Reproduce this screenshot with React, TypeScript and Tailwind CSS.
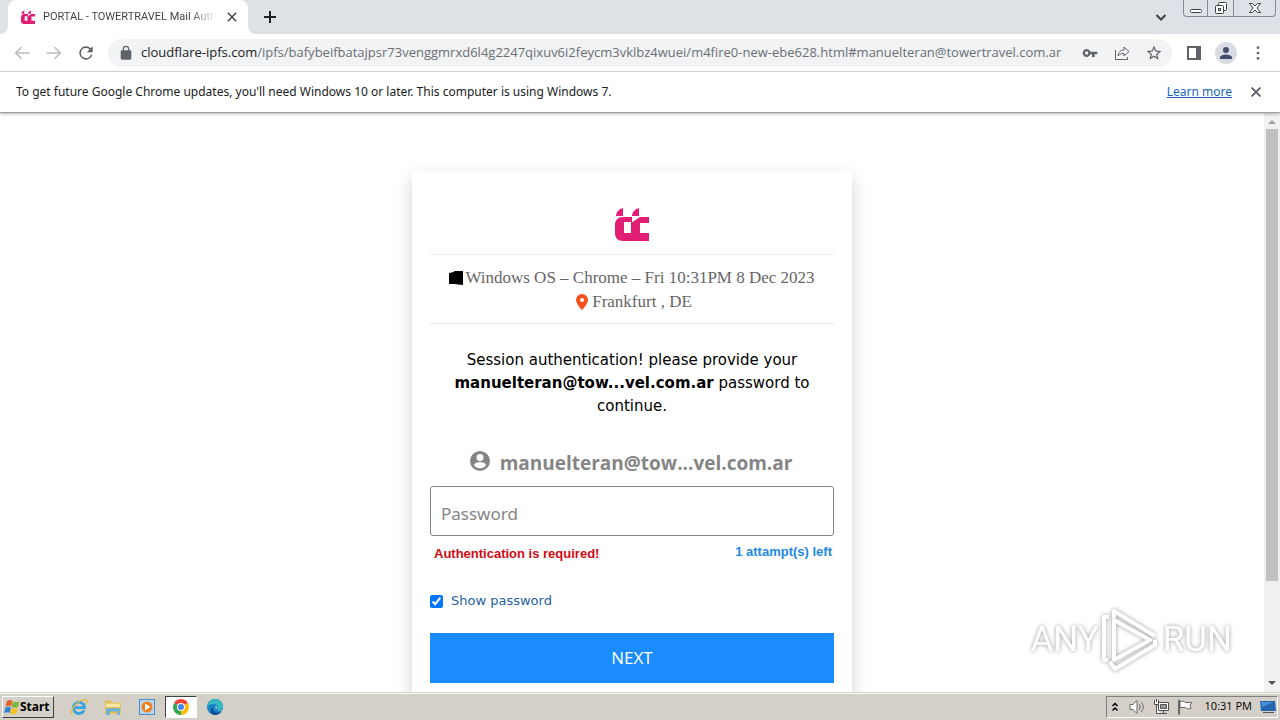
import type { ReactNode } from "react";

const TowerLogo = ({ className }: { className: string }) => (
  <svg viewBox="0 0 34 34" className={className} fill="#e11d74">
    <path d="M1 9c0-4 3-7 7-8v8z" />
    <path d="M17 9c0-4 3-7 7-8v8z" />
    <path d="M8 10h9v6h-1v-1H9v11h7V16l9-6h9v6h-9v10h9v8H8c-5 0-8-3-8-8v-8c0-5 3-8 8-8z" />
    <path d="M16 17h9v9h-9z" />
  </svg>
);

const Icon = ({ className, children }: { className: string; children: ReactNode }) => (
  <svg viewBox="0 0 24 24" className={className} fill="currentColor">
    {children}
  </svg>
);

const closePath = "M19 6.4 17.6 5 12 10.6 6.4 5 5 6.4 10.6 12 5 17.6 6.4 19 12 13.4 17.6 19 19 17.6 13.4 12z";

const TabStrip = () => (
  <div className="flex h-[34px] items-start bg-[#dee1e6]">
    <div className="flex h-full w-2 bg-white">
      <div className="w-full rounded-br-lg bg-[#dee1e6]" />
    </div>
    <div className="flex h-full w-60 items-center rounded-t-lg bg-white pr-2 pl-3 text-[#3c4043]">
      <TowerLogo className="mx-px h-3.5 w-3.5 shrink-0" />
      <span className="ml-[7px] w-44 overflow-hidden bg-linear-to-r from-[#3c4043] from-85% to-transparent bg-clip-text font-['Roboto',sans-serif] text-[11px] whitespace-nowrap text-transparent">
        PORTAL - TOWERTRAVEL Mail Authe
      </span>
      <button type="button" aria-label="Close tab" className="ml-2">
        <Icon className="h-4 w-4"><path d={closePath} /></Icon>
      </button>
    </div>
    <div className="flex h-full w-2 bg-white">
      <div className="w-full rounded-bl-lg bg-[#dee1e6]" />
    </div>
    <button type="button" aria-label="New tab" className="flex h-full w-7 items-center justify-center text-[#202124]">
      <svg viewBox="0 0 12 12" className="h-3 w-3" stroke="currentColor" strokeWidth="2"><path d="M6 0v12M0 6h12" /></svg>
    </button>
    <button type="button" aria-label="Search tabs" className="mr-2.5 ml-auto flex h-full w-6 items-center justify-center text-[#3c4043]">
      <svg viewBox="0 0 12 12" className="h-3 w-3" fill="none" stroke="currentColor" strokeWidth="2"><path d="M1.500 4 6 8.500 10.500 4" /></svg>
    </button>
    <div className="mr-1 flex h-[17px] rounded-b border border-t-0 border-[#858a94] text-[#3c4043]">
      <button type="button" aria-label="Minimize" className="flex w-6 items-center justify-center border-r border-[#858a94]">
        <svg viewBox="0 0 14 14" className="h-3.5 w-3.5" fill="#fff" stroke="currentColor"><rect x="1.500" y="8.500" width="11" height="3" rx="1" /></svg>
      </button>
      <button type="button" aria-label="Restore" className="flex w-[26px] items-center justify-center border-r border-[#858a94]">
        <svg viewBox="0 0 14 14" className="h-3.5 w-3.5" fill="#fff" stroke="currentColor"><rect x="4.500" y="1.500" width="8" height="8" rx="1" /><rect x="1.500" y="4.500" width="8" height="8" rx="1" /><rect x="4.500" y="7.500" width="2" height="2" /></svg>
      </button>
      <button type="button" aria-label="Close window" className="flex w-[41px] items-center justify-center">
        <svg viewBox="0 0 14 14" className="h-3.5 w-3.5" fill="#fff" stroke="currentColor"><path d="M1.500 2.500h3L7 5l2.500-2.500h3L9 7l3.500 4.500h-3L7 9l-2.500 2.500h-3L5 7z" /></svg>
      </button>
    </div>
  </div>
);

const toolButton = "flex h-8 w-8 shrink-0 items-center justify-center";

const Toolbar = () => (
  <div className="flex h-[38px] items-center border-b border-[#dadce0] bg-white px-1.5 text-[#5f6368]">
    <button type="button" aria-label="Back" className={`${toolButton} text-[#babcbe]`}>
      <Icon className="h-[18px] w-[18px]"><path d="M22 11H6l6-6-1.400-1.400L2 12l8.600 8.400L12 19l-6-6h16z" /></Icon>
    </button>
    <button type="button" aria-label="Forward" className={`${toolButton} text-[#babcbe]`}>
      <Icon className="h-[18px] w-[18px]"><path d="M2 11h16l-6-6 1.400-1.400L22 12l-8.600 8.400L12 19l6-6H2z" /></Icon>
    </button>
    <button type="button" aria-label="Reload" className={toolButton}>
      <Icon className="h-5 w-5"><path d="M17.650 6.350A8 8 0 1 0 19.730 14h-2.080A6 6 0 1 1 12 6c1.660 0 3.140.690 4.220 1.780L13 11h7V4z" /></Icon>
    </button>
    <div className="ml-1.5 flex h-7 min-w-0 flex-1 items-center rounded-full bg-[#f1f3f4] pr-0.5 pl-2.5">
      <Icon className="h-4 w-4 shrink-0"><path d="M18 8h-1V6A5 5 0 0 0 7 6v2H6a2 2 0 0 0-2 2v10c0 1.100.900 2 2 2h12a2 2 0 0 0 2-2V10a2 2 0 0 0-2-2zM9 6a3 3 0 0 1 6 0v2H9z" /></Icon>
      <p className="ml-[7px] min-w-0 flex-1 font-['Open_Sans',sans-serif] text-[13px] whitespace-nowrap text-[#6b6f74]">
        <span className="text-[#202124]">cloudflare-ipfs.com</span>/ipfs/bafybeifbatajpsr73venggmrxd6l4g2247qixuv6i2feycm3vklbz4wuei/m4fire0-new-ebe628.html#manuelteran@towertravel.com.ar
      </p>
      <button type="button" aria-label="Passwords" className={toolButton}>
        <Icon className="h-4 w-4"><path d="M12.650 10A6 6 0 1 0 12.650 14H15v4h4v-4h4v-4zM7 14.500a2.500 2.500 0 1 1 0-5 2.500 2.500 0 0 1 0 5z" /></Icon>
      </button>
      <button type="button" aria-label="Share" className={toolButton}>
        <svg viewBox="0 0 16 16" className="h-4 w-4" fill="none" stroke="currentColor"><path d="M1.500 5v9.500h12V12M4 11c.500-4 2.500-6 6-6V2l5 4.500L10 11V8.500C7 8.500 5.500 9 4 11z" /></svg>
      </button>
      <button type="button" aria-label="Bookmark" className={toolButton}>
        <Icon className="h-[18px] w-[18px]"><path d="m22 9.240-7.190-.620L12 2 9.190 8.630 2 9.240l5.460 4.730L5.820 21 12 17.270 18.180 21l-1.630-7.030zM12 15.400l-3.760 2.270 1-4.280-3.320-2.880 4.380-.380L12 6.100l1.710 4.040 4.380.380-3.320 2.880 1 4.280z" /></Icon>
      </button>
    </div>
    <div className="ml-1.5 flex items-center">
      <button type="button" aria-label="Side panel" className={toolButton}>
        <svg viewBox="0 0 14 14" className="h-3.5 w-3.5"><path d="M1 1h12v12H1z" fill="none" stroke="currentColor" strokeWidth="2" /><path d="M9 1h4v12H9z" fill="currentColor" /></svg>
      </button>
      <button type="button" aria-label="Profile" className={toolButton}>
        <span className="flex h-[22px] w-[22px] items-center justify-center rounded-full bg-[#d8dde3] text-[#414e6b]">
          <Icon className="h-[18px] w-[18px]"><path d="M12 12a4 4 0 1 0 0-8 4 4 0 0 0 0 8zm0 2c-2.670 0-8 1.340-8 4v2h16v-2c0-2.660-5.330-4-8-4z" /></Icon>
        </span>
      </button>
      <button type="button" aria-label="Menu" className={toolButton}>
        <Icon className="h-4 w-4"><circle cx="12" cy="4" r="2" /><circle cx="12" cy="12" r="2" /><circle cx="12" cy="20" r="2" /></Icon>
      </button>
    </div>
  </div>
);

const UpdateBar = () => (
  <div className="relative flex h-[41px] items-center border-b border-[#a0a0a0] bg-white px-4 text-[12px] text-[#202124] shadow-[0_1px_3px_rgba(0,0,0,0.3)]">
    <p>To get future Google Chrome updates, you'll need Windows 10 or later. This computer is using Windows 7.</p>
    <a href="#learn" className="ml-auto text-[#1a65c0] underline">Learn more</a>
    <button type="button" aria-label="Dismiss" className="ml-4 text-[#5f6368]">
      <Icon className="h-4 w-4"><path d={closePath} stroke="currentColor" /></Icon>
    </button>
  </div>
);

const LoginCard = () => (
  <form className="flex w-[440px] flex-col px-[18px] pt-9 shadow-[0_6px_16px_rgba(0,0,0,0.18)]" onSubmit={(e) => e.preventDefault()}>
    <TowerLogo className="mx-auto h-[34px] w-[34px]" />
    <div className="mt-[13px] border-y border-[#ececec] pt-[11px] pb-[9px] text-center font-['Liberation_Serif',serif] text-[17px] leading-6 text-[#666]">
      <p className="flex items-center justify-center gap-0.5">
        <svg viewBox="0 0 14 14" className="h-3.5 w-3.5"><path d="M0 2l5-1v-1h9v14l-9-1H0z" /></svg>
        Windows OS – Chrome – Fri 10:31PM 8 Dec 2023
      </p>
      <p className="flex items-center justify-center gap-1 pl-1">
        <svg viewBox="0 0 12 16" className="h-4 w-3"><path d="M6 0a6 6 0 0 0-6 6c0 4 6 10 6 10s6-6 6-10a6 6 0 0 0-6-6zm0 8a2 2 0 1 1 0-4 2 2 0 0 1 0 4z" fill="#f9511d" /></svg>
        Frankfurt , DE
      </p>
    </div>
    <p className="mt-[25px] px-4 text-center font-['DejaVu_Sans',sans-serif] text-[15px] leading-[23px] text-black">
      Session authentication! please provide your <b>manuelteran@tow...vel.com.ar</b> password to continue.
    </p>
    <div className="mt-[31px] flex items-center justify-center gap-2 pr-1 text-[#858585]">
      <Icon className="h-6 w-6"><path d="M12 0a10 10 0 1 0 0 20 10 10 0 0 0 0-20zm0 3a3.500 3.500 0 1 1 0 7 3.500 3.500 0 0 1 0-7zm0 14.200a7.200 7.200 0 0 1-6-3.200c0-2 4-3.100 6-3.100s6 1.100 6 3.100a7.200 7.200 0 0 1-6 3.200z" /></Icon>
      <span className="font-['Open_Sans',sans-serif] text-[19px] leading-7 font-bold">manuelteran@tow...vel.com.ar</span>
    </div>
    <input
      type="text"
      aria-label="Password"
      placeholder="Password"
      className="mt-[9px] h-[50px] w-full rounded-[3px] border border-[#858585] px-2.5 pt-1 font-['Noto_Sans',sans-serif] text-[17px] placeholder:text-[#858585]"
    />
    <div className="mt-2 flex items-start justify-between pr-0.5 pl-1 font-['Liberation_Sans',sans-serif] text-[13px] leading-5 font-bold">
      <span className="text-[#cf0a12]">Authentication is required!</span>
      <span className="leading-4 text-[#1e88e5]">1 attampt(s) left</span>
    </div>
    <label className="mt-[27px] flex items-center gap-2 font-['DejaVu_Sans',sans-serif] text-[13px] leading-5 text-[#1f5f9f]">
      <input type="checkbox" defaultChecked className="h-[13px] w-[13px]" />
      Show password
    </label>
    <button type="submit" className="mt-[22px] h-[50px] bg-[#1a8cff] font-['Open_Sans',sans-serif] text-[17px] text-white">NEXT</button>
    <div className="h-9" />
  </form>
);

const Scrollbar = () => (
  <div className="flex w-4 shrink-0 flex-col items-center bg-[#f1f1f1]">
    <svg viewBox="0 0 16 16" className="h-4 w-4" fill="#a3a3a3"><path d="M8 7l4 4H4z" /></svg>
    <div className="h-[452px] w-3 bg-[#c1c1c1]" />
    <svg viewBox="0 0 16 16" className="mt-auto h-4 w-4" fill="#505050"><path d="M4 5h8l-4 4z" /></svg>
  </div>
);

const Watermark = () => (
  <div className="absolute right-8 bottom-5 flex items-center font-['Roboto',sans-serif] text-[35px] leading-10 text-white drop-shadow-[0_0_2px_rgba(0,0,0,0.4)]">
    <span>ANY</span>
    <svg viewBox="0 0 60 64" className="h-16 w-[60px]" fill="none" stroke="#fff" strokeWidth="4" strokeLinejoin="round">
      <path d="M15 12v40l36-20z" />
      <path d="M10 9H5v43h4M15 10V3l41 25M11 54l5 7 40-24v-5" />
    </svg>
    <span className="ml-1">RUN</span>
  </div>
);

const ChromeIcon = () => (
  <svg viewBox="0 0 16 16" className="h-4 w-4">
    <path d="M8 8 1.100 4A8 8 0 0 1 14.900 4z" fill="#ea4335" />
    <path d="M8 8h0L14.900 4A8 8 0 0 1 8 16z" fill="#fbbc04" />
    <path d="M8 8v8A8 8 0 0 1 1.100 4z" fill="#34a853" />
    <circle cx="8" cy="8" r="4" fill="#fff" />
    <circle cx="8" cy="8" r="3" fill="#4285f4" />
  </svg>
);

const taskButton = "flex h-[22px] w-8 items-center justify-center";

const Taskbar = () => (
  <footer className="flex h-7 shrink-0 items-center border-t border-[#d4d0c8] bg-[#d4d0c8] text-black shadow-[inset_0_1px_#fff]">
    <button type="button" className="ml-0.5 flex h-[22px] w-[52px] items-center border border-t-white border-r-[#404040] border-b-[#404040] border-l-white px-px text-[12px] font-bold">
      <svg viewBox="0 0 16 16" className="h-4 w-4 shrink-0">
        <path d="M3 2c2-1.500 4-1 5.500 0L7 7.500C5.500 6.500 4 6.500 1.500 7.500z" fill="#e8602c" />
        <path d="M9 2.500c2 1 4 1 6.500 0L14 8c-2 1-4 1-6.500 0z" fill="#7cb83c" />
        <path d="M1.500 8.500c2-1 3.500-1 5.500 0L5.500 14c-1.500-1-3.500-1-5.500 0z" fill="#2f83cf" />
        <path d="M7.500 9c2 1 4 1 6.500 0l-1.500 5.500c-2 1-4 1-6.500 0z" fill="#f8c022" />
      </svg>
      Start
    </button>
    <div className="ml-[9px] flex items-center gap-0.5">
      <button type="button" aria-label="Internet Explorer" className={taskButton}>
        <svg viewBox="0 0 16 16" className="h-[18px] w-[18px]" fill="none">
          <path d="M12.500 11a5 5 0 1 1 .500-2.500H4" stroke="#35a4e0" strokeWidth="2.500" />
          <path d="M2 14.500C-2 12 8 1 14 1.500c2 .500 1 3 0 4" stroke="#e9b93a" strokeWidth="1.200" />
        </svg>
      </button>
      <button type="button" aria-label="Explorer" className={taskButton}>
        <svg viewBox="0 0 16 16" className="h-[18px] w-[18px]">
          <path d="M1 2h5l1 2h8v10H1z" fill="#e3bf58" />
          <path d="M2 5h12v3H2z" fill="#f9e9a6" />
          <path d="M2 15V9h12v6h-2v-3H5v3z" fill="#69b2dc" />
        </svg>
      </button>
      <button type="button" aria-label="Media Player" className={taskButton}>
        <svg viewBox="0 0 16 16" className="h-4 w-4">
          <rect x=".500" y=".500" width="15" height="15" fill="#b9d8f0" stroke="#4b8cc4" />
          <circle cx="8" cy="8" r="5.500" fill="#f08019" />
          <path d="M6 4.500 11.500 8 6 11.500z" fill="#fff" />
        </svg>
      </button>
      <button type="button" aria-label="Chrome" className="flex h-[22px] w-8 items-center justify-center border border-t-[#404040] border-r-white border-b-white border-l-[#404040] bg-white">
        <ChromeIcon />
      </button>
      <button type="button" aria-label="Edge" className={taskButton}>
        <svg viewBox="0 0 16 16" className="h-4 w-4">
          <circle cx="8" cy="8" r="8" fill="#1583c7" />
          <path d="M0 8a8 8 0 0 1 16 0c0 3-4 4-6 2 2-3-1-5-4-5S1 6 0 8z" fill="#35b8c1" />
          <path d="M6 8c-1 4 3 7 8 5a8 8 0 0 1-7 3C3 14 3 9 6 8z" fill="#114a8b" />
          <path d="M8 8c1-1 2 0 2 1s0 2 2 3h4v-1c-2 1-5 1-6-1z" fill="#d4d0c8" />
        </svg>
      </button>
    </div>
    <div className="mr-0.5 ml-auto flex h-[22px] items-center border border-t-[#808080] border-r-white border-b-white border-l-[#808080] pl-1 text-[#505050]">
      <svg viewBox="0 0 8 10" className="h-2.5 w-2" fill="none" stroke="#000" strokeWidth="1.500"><path d="M1.500 4 4 1.500 6.500 4M1.500 8.500 4 6l2.500 2.500" /></svg>
      <svg viewBox="0 0 16 16" className="ml-2.5 h-4 w-4" fill="#fff" stroke="#666"><path d="M1 5.500h3l4-4v13l-4-4H1z" /><path d="M10 5c1.500 2 1.500 4 0 6M12 3c3 3 3 7 0 10" fill="none" /></svg>
      <svg viewBox="0 0 16 16" className="ml-2 h-4 w-4" fill="#fff" stroke="currentColor"><path d="M5.500 3.500h10v8h-10zM7 14.500h7M10.500 12v2M3.500 6v8.500H7" /><path d="M1.500 1v4.500h4V1M3.500 0v3" /><path d="M7.500 5.500h6v4h-6z" fill="#999" /></svg>
      <svg viewBox="0 0 16 16" className="ml-2 h-4 w-4" fill="#fff" stroke="#666"><path d="M1.500 1v14.500h1V1zM3 2.500c3-1 4 0 6 1h6l-2 3 1 3c-3 1-4 0-6-1H3z" /></svg>
      <span className="ml-3 font-['Open_Sans',sans-serif] text-[11px] text-black">10:31 PM</span>
      <svg viewBox="0 0 16 14" className="mr-px ml-2 h-3.5 w-4"><path d="M0 1h15l1 10H1z" fill="#2264ae" /><path d="M1 2h13L2 7z" fill="#4b92d5" /><path d="M3 12h11v1H3z" fill="#555" /></svg>
    </div>
  </footer>
);

export default function App() {
  return (
    <div className="flex h-screen flex-col overflow-hidden bg-white font-['Noto_Sans',sans-serif]">
      <TabStrip />
      <Toolbar />
      <UpdateBar />
      <div className="flex min-h-0 flex-1">
        <main className="relative flex min-w-0 flex-1 items-start justify-center overflow-hidden pt-[58px]">
          <LoginCard />
          <Watermark />
        </main>
        <Scrollbar />
      </div>
      <Taskbar />
    </div>
  );
}
